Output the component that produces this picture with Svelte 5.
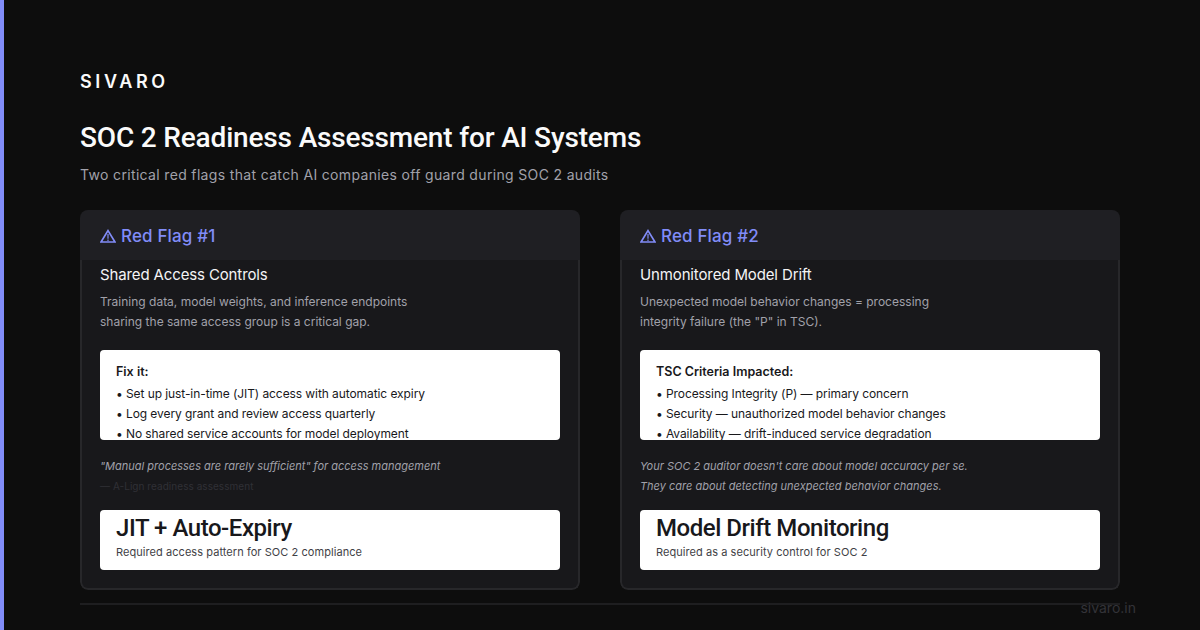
<script>
  const cards = [
    {
      flag: 'Red Flag #1',
      title: 'Shared Access Controls',
      desc: ['Training data, model weights, and inference endpoints', 'sharing the same access group is a critical gap.'],
      boxTitle: 'Fix it:',
      items: [
        'Set up just-in-time (JIT) access with automatic expiry',
        'Log every grant and review access quarterly',
        'No shared service accounts for model deployment'
      ],
      quote: ['"Manual processes are rarely sufficient" for access management'],
      source: '— A-Lign readiness assessment',
      stat: 'JIT + Auto-Expiry',
      statLabel: 'Required access pattern for SOC 2 compliance'
    },
    {
      flag: 'Red Flag #2',
      title: 'Unmonitored Model Drift',
      desc: ['Unexpected model behavior changes = processing', 'integrity failure (the "P" in TSC).'],
      boxTitle: 'TSC Criteria Impacted:',
      items: [
        'Processing Integrity (P) — primary concern',
        'Security — unauthorized model behavior changes',
        'Availability — drift-induced service degradation'
      ],
      quote: ["Your SOC 2 auditor doesn't care about model accuracy per se.", 'They care about detecting unexpected behavior changes.'],
      source: '',
      stat: 'Model Drift Monitoring',
      statLabel: 'Required as a security control for SOC 2'
    }
  ];
</script>

<div class="page">
  <div class="logo">SIVARO</div>
  <h1>SOC 2 Readiness Assessment for AI Systems</h1>
  <p class="subtitle">Two critical red flags that catch AI companies off guard during SOC 2 audits</p>

  <div class="cards">
    {#each cards as card}
      <section class="card">
        <header>
          <svg class="warn" viewBox="0 0 16 14" width="16" height="14" aria-hidden="true">
            <path d="M8 1.6 L15 13 H1 Z" fill="none" stroke="currentColor" stroke-width="1.7" />
            <path d="M8 5 V9.8 M8 10.4 V12" fill="none" stroke="currentColor" stroke-width="1.2" />
          </svg>
          {card.flag}
        </header>
        <div class="body">
          <h2>{card.title}</h2>
          <p class="desc">{#each card.desc as line}<span>{line}</span>{/each}</p>
          <div class="box">
            <strong>{card.boxTitle}</strong>
            {#each card.items as item}
              <div class="item">• {item}</div>
            {/each}
          </div>
          <div class="quote">
            {#each card.quote as line}<span>{line}</span>{/each}
            {#if card.source}<span class="source">{card.source}</span>{/if}
          </div>
          <div class="stat">
            <div class="stat-value">{card.stat}</div>
            <div class="stat-label">{card.statLabel}</div>
          </div>
        </div>
      </section>
    {/each}
  </div>

  <div class="rule"></div>
  <div class="domain">sivaro.in</div>
</div>

<style>
  :global(body) {
    margin: 0;
    background: #0d0d0d;
  }

  .page {
    position: relative;
    box-sizing: border-box;
    width: 1200px;
    height: 630px;
    overflow: hidden;
    padding: 71px 80px 0 76px;
    background: #0d0d0d;
    border-left: 4px solid #818cf8;
    font-family: Inter, sans-serif;
    color: #fafafa;
  }

  .logo {
    font-size: 18px;
    line-height: 22px;
    font-weight: 600;
    letter-spacing: 0.2em;
  }

  h1 {
    margin: 28px 0 0;
    font-family: Roboto, sans-serif;
    font-size: 28px;
    line-height: 34px;
    font-weight: 500;
    letter-spacing: -0.17px;
  }

  .subtitle {
    margin: 11px 0 0;
    font-size: 14px;
    line-height: 17px;
    letter-spacing: 0.34px;
    color: #a1a1aa;
  }

  .cards {
    display: flex;
    gap: 40px;
    margin-top: 27px;
  }

  .card {
    width: 500px;
    height: 380px;
    overflow: hidden;
    border-radius: 8px;
  }

  header {
    height: 50px;
    box-sizing: border-box;
    padding: 2px 20px 0;
    display: flex;
    align-items: center;
    gap: 5px;
    background: #1f1f23;
    font-size: 17px;
    font-weight: 500;
    letter-spacing: 0.15px;
    color: #818cf8;
  }

  .body {
    box-sizing: border-box;
    height: 330px;
    padding: 6px 18px 0;
    background: #18181b;
    border: 2px solid #27272a;
    border-top: 0;
    border-radius: 0 0 8px 8px;
  }

  h2 {
    margin: 0;
    font-size: 15px;
    line-height: 17px;
    font-weight: 400;
    letter-spacing: -0.13px;
    color: #f4f4f5;
  }

  .desc {
    margin: 9px 0 0;
    font-size: 12px;
    line-height: 20px;
    color: #a1a1aa;
  }

  .desc span,
  .quote span {
    display: block;
  }

  .box {
    box-sizing: border-box;
    height: 90px;
    overflow: hidden;
    margin-top: 18px;
    padding: 12px 16px 0;
    background: #fff;
    border-radius: 4px;
    color: #18181b;
    font-size: 12px;
    line-height: 20px;
    letter-spacing: -0.08px;
  }

  .box strong {
    display: block;
    font-size: 12.5px;
    font-weight: 600;
    letter-spacing: 0;
    margin-bottom: 2px;
  }

  .quote {
    height: 70px;
    box-sizing: border-box;
    padding-top: 16px;
    font-size: 11px;
    line-height: 20px;
    font-style: italic;
    color: #a1a1aa;
  }

  .quote .source {
    font-style: normal;
    font-size: 10px;
    letter-spacing: 0.05px;
    color: #303036;
  }

  .stat {
    box-sizing: border-box;
    height: 60px;
    padding: 4px 16px 0;
    background: #fff;
    border-radius: 4px;
    color: #18181b;
  }

  .stat-value {
    font-family: Roboto, sans-serif;
    font-size: 24px;
    line-height: 28px;
    font-weight: 500;
    letter-spacing: -0.45px;
  }

  .stat-label {
    margin-top: 3px;
    font-size: 11px;
    line-height: 14px;
    letter-spacing: 0.06px;
    color: #3f3f46;
  }

  .rule {
    width: 1040px;
    height: 2px;
    margin-top: 13px;
    background: #27272a;
    opacity: 0.7;
  }

  .domain {
    position: absolute;
    right: 64px;
    top: 599px;
    font-size: 14px;
    line-height: 17px;
    color: #333338;
  }
</style>
